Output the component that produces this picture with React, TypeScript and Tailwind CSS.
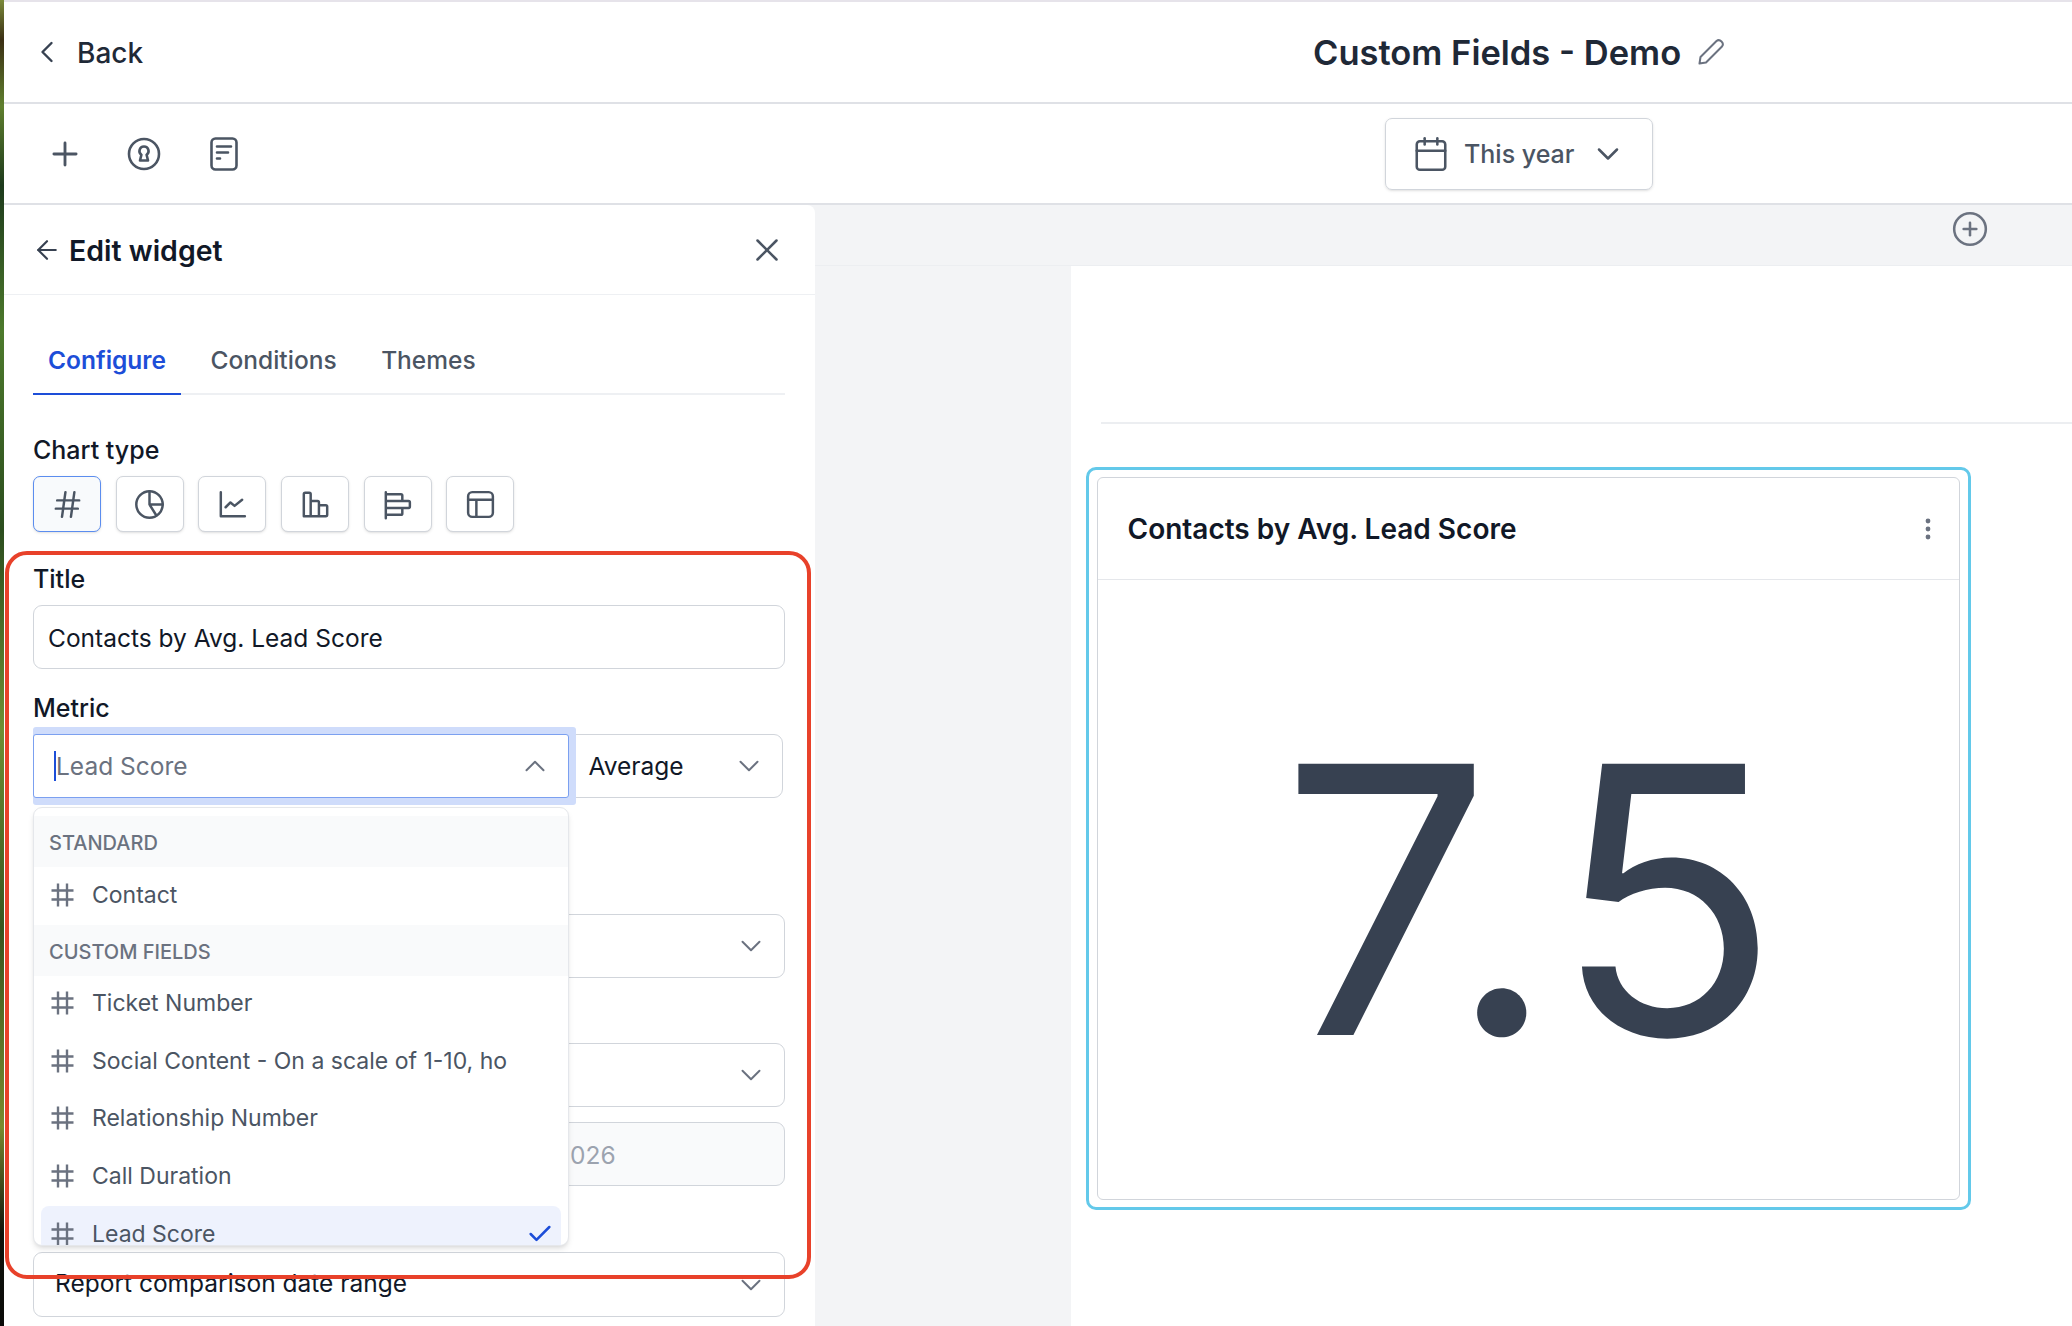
import React from 'react';
import { ArrowLeft, Calendar, Check, ChevronDown, ChevronLeft, ChevronUp, CirclePlus, Plus, X } from 'lucide-react';

function ThinHash() {
  return (
    <svg width="23" height="24" viewBox="0 0 23 24" fill="none" stroke="#6b7280" strokeWidth="2.4" className="shrink-0">
      <path d="M7 0.5v23M16 0.5v23M0.5 7.5h22M0.5 16.5h22" />
    </svg>
  );
}

function ChartIcon({ kind }: { kind: string }) {
  return (
    <svg width="33" height="33" viewBox="0 0 24 24" fill="none" stroke="#4b5563" strokeWidth="1.8" strokeLinecap="round" strokeLinejoin="round">
      {kind === 'number' && <path d="M4.5 9h16M3.5 15h16M10.5 3 8 21M17 3l-2.5 18" />}
      {kind === 'pie' && (
        <>
          <circle cx="12" cy="12" r="9.6" />
          <path d="M12 2.4V12l5 8M12 12h9.6" />
        </>
      )}
      {kind === 'line' && <path d="M3.5 3v17.5h17.5M7 14l3.5-3.5 3 2.5L19 8.5" />}
      {kind === 'bars' && <path d="M3.5 20.5V4.5q0-1 1-1h3q1 0 1 1v16M8.5 9.5h5q1 0 1 1v10M14.5 12.5h5q1 0 1 1v6q0 1-1 1h-15q-1 0-1-1" />}
      {kind === 'hbars' && <path d="M3.5 3v19M3.5 4.5h11q1 0 1 1v4M3.5 9.5h16.5q1 0 1 1v3q0 1-1 1H3.5M3.5 14.5h12v4q0 1-1 1h-11" />}
      {kind === 'table' && (
        <>
          <rect x="3" y="3" width="18" height="18" rx="3" />
          <path d="M3 8.5h18M9 8.5V21" />
        </>
      )}
    </svg>
  );
}

const chartKinds = ['number', 'pie', 'line', 'bars', 'hbars', 'table'];
const customFields = ['Ticket Number', 'Social Content - On a scale of 1-10, how', 'Relationship Number', 'Call Duration'];

function SelectBox({ className, chevron = true, children }: { className: string; chevron?: boolean; children?: React.ReactNode }) {
  return (
    <div className={`flex w-[751.5px] items-center rounded-[9px] border border-[#d1d5db] ${className}`}>
      {children}
      {chevron && <ChevronDown size={34} strokeWidth={1.4} className="ml-auto mr-[16px] shrink-0 text-[#6b7280]" />}
    </div>
  );
}

export default function App() {
  return (
    <div className="relative flex h-[1326px] w-[2072px] overflow-hidden bg-white font-['Inter',sans-serif] text-[#111827]">
      {/* wallpaper showing at the window edge */}
      <div className="w-[4px] shrink-0 bg-[linear-gradient(180deg,#7b8a3a_0%,#3b2f14_3%,#5f7f2e_8%,#1d3a1c_14%,#4d7a2c_25%,#2b4d1e_40%,#6f8f34_55%,#39561f_70%,#7a8a2e_85%,#11140c_93%,#0a0a08_100%)]" />

      <div className="flex min-w-0 flex-1 flex-col">
        <div className="h-[2px] shrink-0 bg-[#e6e3ea]" />

        {/* Header */}
        <div className="flex h-[102px] shrink-0 items-center border-b-2 border-[#dfe1e6]">
          <div className="flex w-[1309px] items-center">
            <ChevronLeft size={36} strokeWidth={1.6} className="ml-[25px] text-[#374151]" />
            <span className="ml-[12px] pt-[2px] text-[28px] font-medium text-[#1f2937]">Back</span>
          </div>
          <h1 className="pt-[2px] text-[34.5px] font-semibold text-[#1f2937]">Custom Fields - Demo</h1>
          <svg width="28" height="28" viewBox="0 0 28 28" fill="none" stroke="#6b7280" strokeWidth="2" strokeLinejoin="round" className="ml-[16px]">
            <path d="M2.5 25.5 3.5 19 19.5 3q2.5-2 5 .5t.5 5L9 24.5z" />
          </svg>
        </div>

        {/* Toolbar */}
        <div className="flex h-[101px] shrink-0 items-center border-b-2 border-[#dfe1e6]">
          <Plus size={38} strokeWidth={1.8} className="ml-[42px] text-[#4b5563]" />
          <svg width="34" height="34" viewBox="0 0 34 34" fill="none" stroke="#4b5563" strokeWidth="2.6" strokeLinejoin="round" className="ml-[43px]">
            <circle cx="17" cy="17" r="15" />
            <path d="M17 9.5a4.5 4.5 0 0 0-2.6 8.2L13 23.5h8l-1.4-5.8A4.5 4.5 0 0 0 17 9.5z" />
          </svg>
          <svg width="28" height="34" viewBox="0 0 28 34" fill="none" stroke="#4b5563" strokeWidth="2.6" strokeLinecap="round" className="ml-[49px]">
            <rect x="1.5" y="1.5" width="25" height="31" rx="4" />
            <path d="M7 9.5h14M7 15.5h11M7 21.5h3" />
          </svg>
          <div className="ml-[1147px] flex h-[72px] w-[268px] items-center rounded-[7px] border border-[#d1d5db] pl-[26px] shadow-sm">
            <Calendar size={38} strokeWidth={1.6} className="shrink-0 text-[#4b5563]" />
            <span className="ml-[14px] whitespace-nowrap pt-[2px] text-[25px] font-medium text-[#4b5563]">This year</span>
            <ChevronDown size={36} strokeWidth={1.7} className="ml-[15px] shrink-0 text-[#4b5563]" />
          </div>
        </div>

        <div className="flex min-h-0 flex-1 bg-[#f3f4f6]">
          {/* Edit widget panel */}
          <div className="relative w-[811px] shrink-0 rounded-tr-lg bg-white">
            <div className="flex h-[90px] items-center border-b border-[#eef0f3]">
              <ArrowLeft size={30} strokeWidth={1.7} className="ml-[28px] text-[#374151]" />
              <span className="ml-[7px] pt-[3px] text-[28.5px] font-semibold text-[#111827]">Edit widget</span>
              <X size={38} strokeWidth={1.6} className="ml-auto mr-[29px] text-[#4b5563]" />
            </div>

            <div className="px-[29px]">
              <div className="flex h-[100px] w-[751.5px] items-stretch gap-[14.5px] border-b-2 border-[#eef0f3] pt-[32px] text-[24.5px]">
                <div className="-mb-[2px] flex items-center border-b-2 border-[#1d4ed8] px-[15px] font-semibold text-[#1d4ed8]">Configure</div>
                <div className="flex items-center px-[15px] font-medium text-[#4b5563]">Conditions</div>
                <div className="flex items-center px-[15px] font-medium text-[#4b5563]">Themes</div>
              </div>

              <div className="mt-[38px] text-[25px] font-medium leading-[34px] text-[#111827]">Chart type</div>
              <div className="mt-[9px] flex gap-[14.7px]">
                {chartKinds.map((kind, i) => (
                  <div
                    key={kind}
                    className={`flex h-[56px] w-[68px] items-center justify-center rounded-[7px] border shadow-sm ${
                      i === 0 ? 'border-[#5b8def] bg-[#f8fafc]' : 'border-[#d1d5db] bg-white'
                    }`}
                  >
                    <ChartIcon kind={kind} />
                  </div>
                ))}
              </div>

              <div className="mt-[30px] text-[25px] font-medium leading-[34px] text-[#111827]">Title</div>
              <div className="mt-[9px] flex h-[64px] w-[751.5px] items-center rounded-[9px] border border-[#d1d5db] px-[14px] pt-[2px] text-[24.5px]">
                Contacts by Avg. Lead Score
              </div>

              <div className="mt-[22px] text-[25px] font-medium leading-[34px] text-[#111827]">Metric</div>
              <div className="mt-[9px] flex h-[64px] w-[750px]">
                <div className="relative z-10 flex w-[535.5px] shrink-0 items-center rounded-[3px] border border-[#7ba0f0] bg-white pl-[20px] text-[24.5px] text-[#6b7280] shadow-[7px_0_0_0_#cfdcfb,0_-7px_0_0_#cfdcfb,0_7px_0_0_#cfdcfb,7px_-7px_0_0_#cfdcfb,7px_7px_0_0_#cfdcfb]">
                  <span className="h-[30px] w-[2px] bg-[#1d4ed8]" />
                  Lead Score
                  <ChevronUp size={34} strokeWidth={1.4} className="ml-auto mr-[16px] text-[#6b7280]" />
                </div>
                <div className="flex flex-1 items-center rounded-r-[9px] border border-[#d1d5db] pl-[19px] text-[24.5px]">
                  Average
                  <ChevronDown size={34} strokeWidth={1.4} className="ml-auto mr-[16px] text-[#6b7280]" />
                </div>
              </div>

              <SelectBox className="mt-[116px] h-[64px]" />
              <SelectBox className="mt-[65px] h-[64px]" />
              <SelectBox className="mt-[15px] h-[64px] bg-[#f9fafb] text-[24.5px] text-[#9ca3af]" chevron={false}>
                <span className="ml-[536px] pt-[2px]">026</span>
              </SelectBox>
              <SelectBox className="mt-[66px] h-[65px] text-[24.5px]">
                <span className="ml-[21px] pb-[2px]">Report comparison date range</span>
              </SelectBox>
            </div>

            {/* Metric dropdown */}
            <div className="absolute left-[29px] top-[602px] z-20 h-[439px] w-[535.5px] overflow-hidden rounded-[9px] border border-[#e5e7eb] bg-white pt-[8px] shadow-md">
              <div className="flex h-[51px] items-center bg-[#f9fafb] pl-[15px] pt-[2px] text-[20px] font-medium text-[#6b7280]">STANDARD</div>
              <div className="flex h-[57.5px] items-center pb-[2px] pl-[17px] text-[23px] text-[#4b5563]">
                <ThinHash />
                <span className="ml-[18px]">Contact</span>
              </div>
              <div className="flex h-[51px] items-center bg-[#f9fafb] pl-[15px] pt-[4px] text-[20px] font-medium text-[#6b7280]">CUSTOM FIELDS</div>
              {customFields.map(field => (
                <div key={field} className="flex h-[57.5px] items-center pb-[2px] pl-[17px] text-[23px] text-[#4b5563]">
                  <ThinHash />
                  <span className="ml-[18px] w-[415px] overflow-hidden whitespace-nowrap">{field}</span>
                </div>
              ))}
              <div className="mx-[7px] flex h-[57.5px] items-center rounded-lg bg-[#eef2fd] pl-[10px] text-[23px] text-[#4b5563]">
                <ThinHash />
                <span className="ml-[18px]">Lead Score</span>
                <Check size={28} strokeWidth={2.2} className="ml-auto mr-[7px] text-[#1d4ed8]" />
              </div>
            </div>
          </div>

          {/* Dashboard canvas */}
          <div className="flex min-w-0 flex-1 flex-col">
            <div className="flex h-[61px] shrink-0 justify-end border-b border-[#eceef1] pr-[83px] pt-[5px]">
              <CirclePlus size={38} strokeWidth={1.6} className="text-[#6b7280]" />
            </div>
            <div className="ml-[256px] flex-1 bg-white">
              <div className="ml-[30px] h-[158px] border-b-2 border-[#eceef1]" />
              <div className="ml-[14.5px] mt-[43px] h-[743px] w-[885.5px] rounded-[10px] border-[3px] border-[#63c9ea] px-[8px] py-[7px]">
                <div className="flex h-full flex-col rounded-md border border-[#d1d5db]">
                  <div className="flex h-[102px] shrink-0 items-center justify-between border-b border-[#e5e7eb] pl-[30px] pr-[28px]">
                    <span className="text-[28px] font-semibold text-[#111827]">Contacts by Avg. Lead Score</span>
                    <svg width="6" height="22" viewBox="0 0 6 22" fill="#6b7280">
                      <circle cx="3" cy="3" r="2.4" />
                      <circle cx="3" cy="11" r="2.4" />
                      <circle cx="3" cy="19" r="2.4" />
                    </svg>
                  </div>
                  <div className="flex flex-1 items-center justify-center pl-[7px] pt-[20px] text-[373px] leading-none tracking-[3px] text-[#374151]">7.5</div>
                </div>
              </div>
            </div>
          </div>
        </div>
      </div>

      {/* Red annotation box */}
      <div className="pointer-events-none absolute left-[5px] top-[551px] z-30 h-[728px] w-[806px] rounded-[22px] border-[4px] border-[#e8412a]" />
    </div>
  );
}
